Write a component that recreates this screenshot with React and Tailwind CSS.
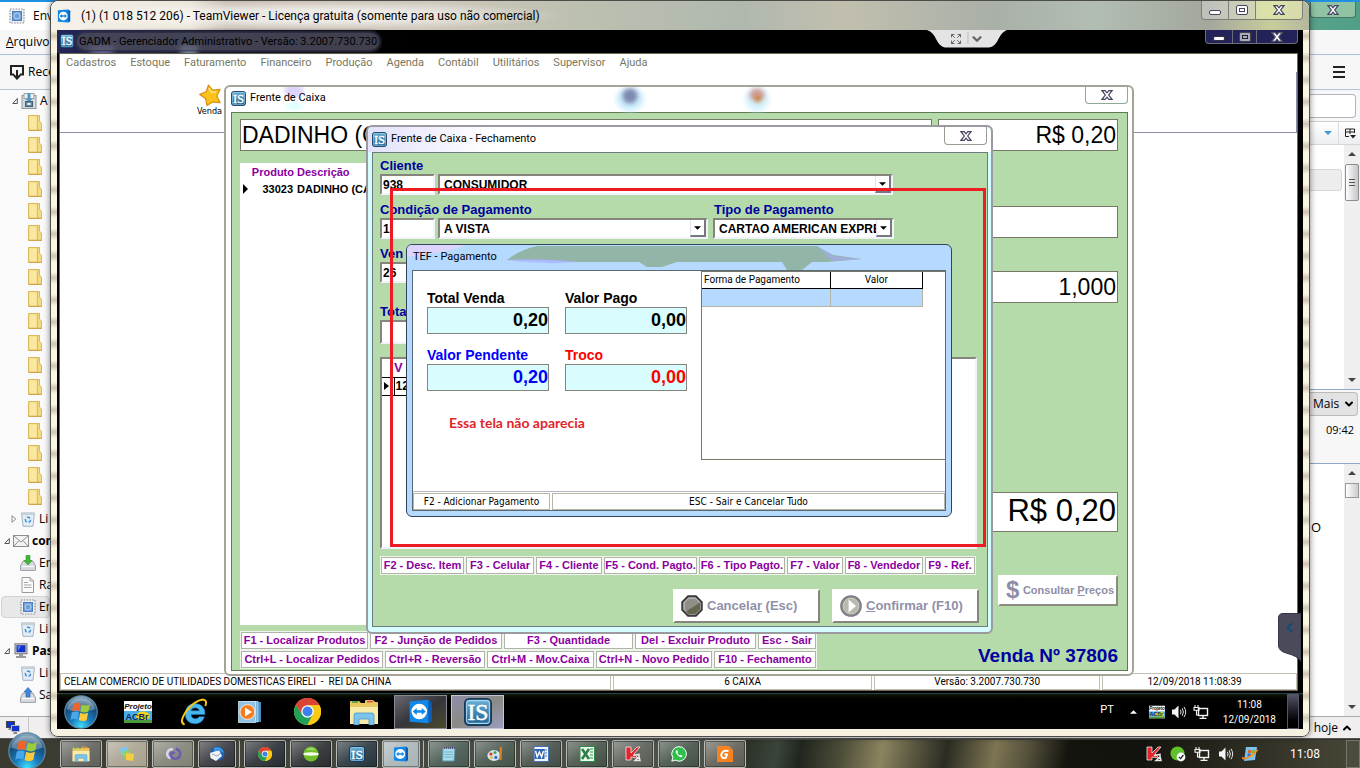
import React from "react";
import { ChevronDown, ChevronUp, ChevronLeft, Expand } from "lucide-react";

const ui = "font-['Open_Sans','Noto_Sans',sans-serif]";
const title = "font-[Roboto,'Open_Sans',sans-serif]";
const sans = "font-['Liberation_Sans',Arial,sans-serif]";
const tahoma = "font-['DejaVu_Sans_Condensed','DejaVu_Sans',sans-serif]";

/* ---------- icons ---------- */

function ISIcon({ className }) {
  return (
    <svg viewBox="0 0 16 16" className={className} aria-hidden="true">
      <defs>
        <linearGradient id="isg" x1="0" y1="0" x2="0" y2="1">
          <stop offset="0" stopColor="#6db4d8" />
          <stop offset="1" stopColor="#1c5f92" />
        </linearGradient>
      </defs>
      <rect x="0.5" y="0.5" width="15" height="15" rx="2.5" fill="url(#isg)" stroke="#153a5c" />
      <rect x="1.5" y="1.5" width="13" height="13" rx="1.5" fill="none" stroke="#a8d4ec" strokeWidth="0.6" />
      <text x="8" y="12.8" textAnchor="middle" fontFamily="Liberation Serif, serif" fontSize="13.5" fill="#fff" stroke="#fff" strokeWidth="0.3">IS</text>
    </svg>
  );
}

function TVIcon({ className }) {
  return (
    <svg viewBox="0 0 16 16" className={className} aria-hidden="true">
      <path d="M1 1.5 L13 0.5 L15 2.5 V14 L13 15.5 L1 14.5 Z" fill="#1187e8" />
      <path d="M13 0.5 L15 2.5 V14 L13 15.5 Z" fill="#0a5cb4" />
      <circle cx="7.2" cy="8" r="5" fill="#fff" />
      <path d="M3 8 L5.6 5.8 V7.2 H8.8 V5.8 L11.4 8 L8.8 10.2 V8.8 H5.6 V10.2 Z" fill="#1187e8" />
    </svg>
  );
}

function StartOrb({ className }) {
  return (
    <svg viewBox="0 0 36 36" className={className} aria-hidden="true">
      <defs>
        <radialGradient id="orb" cx="0.5" cy="0.95" r="0.9">
          <stop offset="0" stopColor="#3fe0ff" />
          <stop offset="0.35" stopColor="#1b7fc0" />
          <stop offset="0.75" stopColor="#174a78" />
          <stop offset="1" stopColor="#7fa2b8" />
        </radialGradient>
      </defs>
      <circle cx="18" cy="18" r="17.2" fill="url(#orb)" stroke="#5c87a5" strokeWidth="1.2" />
      <path d="M3 15 A15.5 15.5 0 0 1 33 15 Q18 20 3 15Z" fill="#fff" opacity="0.3" />
      <path d="M10 9.5 Q13.5 7.2 17.6 9.4 L16.2 17 Q12.5 15 8.6 17.2 Z" fill="#f0642c" />
      <path d="M18.8 10 Q23 12.2 27.4 9.8 L25.8 17.4 Q21.6 19.6 17.4 17.4 Z" fill="#9ccb3c" />
      <path d="M8.3 18.6 Q12 16.4 15.9 18.4 L14.4 26 Q10.8 24 6.9 26.2 Z" fill="#49a8ea" />
      <path d="M17.1 18.8 Q21.2 21 25.5 18.8 L24 26.4 Q20 28.8 15.7 26.6 Z" fill="#fcc93a" />
    </svg>
  );
}

function ChromeIcon({ className }) {
  return (
    <svg viewBox="0 0 26 26" className={className} aria-hidden="true">
      <circle cx="13" cy="13" r="13" fill="#fbc916" />
      <path d="M1.75 6.5 A13 13 0 0 0 13 26 L18.2 16 L13 13 L7.8 16 Z" fill="#1fa05b" />
      <path d="M13 7 H24.6 A13 13 0 0 0 1.75 6.5 L7.8 16 Z" fill="#dc4437" />
      <path d="M24.6 7 H13 L18.2 16 L13 26 A13 13 0 0 0 24.6 7Z" fill="#fbc916" />
      <circle cx="13" cy="13" r="6" fill="#fff" />
      <circle cx="13" cy="13" r="4.8" fill="#3f80ef" />
    </svg>
  );
}

function ExplorerIcon({ className }) {
  return (
    <svg viewBox="0 0 30 26" className={className} aria-hidden="true">
      <path d="M1 3 Q1 2 2 2 H10 L12 4 H16 V2 Q16 1 17 1 H24 L26 3 H28 Q29 3 29 4 V25 H1 Z" fill="#e9c95f" />
      <path d="M1 8 H29 V25 H1 Z" fill="#f9ecab" />
      <path d="M3 3 H9" stroke="#3d9e4a" strokeWidth="1.6" />
      <path d="M18 2.6 H24" stroke="#e05040" strokeWidth="1.6" />
      <path d="M5 26 V16 Q5 14 7 14 H23 Q25 14 25 16 V26 H20 V20 H10 V26 Z" fill="#7cc4ec" stroke="#4a97c9" strokeWidth="0.8" />
    </svg>
  );
}

function AcbrIcon({ className }) {
  return (
    <svg viewBox="0 0 28 22" className={className} aria-hidden="true">
      <rect width="28" height="22" fill="#fff" />
      <rect y="10" width="28" height="9" fill="#49aee6" />
      <ellipse cx="19" cy="15" rx="7" ry="4.4" fill="#f4d21e" />
      <rect y="19" width="28" height="3" fill="#4c9a3e" />
      <text x="14" y="8" textAnchor="middle" fontFamily="Liberation Sans, sans-serif" fontSize="8" fontWeight="bold" fontStyle="italic" fill="#111">Projeto</text>
      <text x="13" y="18.5" textAnchor="middle" fontFamily="Liberation Sans, sans-serif" fontSize="9" fontWeight="bold" fill="#14265e">ACBr</text>
    </svg>
  );
}

function IEIcon({ className }) {
  return (
    <svg viewBox="0 0 28 28" className={className} aria-hidden="true">
      <path d="M25 16.4 H11 Q11.6 20.8 15.4 20.8 Q18 20.8 19.2 18.8 H24.4 Q22 25.8 15 25.8 Q5.4 25.4 5.2 15.8 Q5.6 6 15 5.6 Q25 6 25 16.4 Z M11 12.8 H19.4 Q18.8 9.8 15.2 9.8 Q11.8 9.8 11 12.8Z" fill="#4ab8f0" stroke="#1f80c4" strokeWidth="0.6" fillRule="evenodd" />
      <path d="M4.6 26.6 Q-1.5 24.6 6.4 13 Q15 2.6 22.6 1.6 Q27.8 1.8 25.4 8" fill="none" stroke="#f5c518" strokeWidth="2" />
    </svg>
  );
}

function WmpIcon({ className }) {
  return (
    <svg viewBox="0 0 24 22" className={className} aria-hidden="true">
      <rect x="7" y="1" width="16" height="20" fill="#4b8fc0" />
      <rect x="4" y="0.5" width="16" height="20.5" fill="#77b3dc" stroke="#fff" strokeWidth="0.5" />
      <rect x="0.5" y="0.5" width="17" height="21" fill="#8ec3e6" stroke="#d9eefa" strokeWidth="0.7" />
      <circle cx="9.4" cy="11" r="7.4" fill="#f57c1e" stroke="#fff" strokeWidth="0.8" />
      <path d="M7 6.6 L14 11 L7 15.4Z" fill="#fff" />
    </svg>
  );
}

function VolumeIcon({ className }) {
  return (
    <svg viewBox="0 0 16 16" className={className} aria-hidden="true">
      <path d="M1 5.5 H3.5 L7.5 1.5 V14.5 L3.5 10.5 H1 Z" fill="#f4f4f4" />
      <path d="M9.4 5.8 Q10.8 8 9.4 10.2 M11.2 4.2 Q13.6 8 11.2 11.8 M13 2.8 Q16.4 8 13 13.2" fill="none" stroke="#e8e8e8" strokeWidth="1" />
    </svg>
  );
}

function NetworkIcon({ className }) {
  return (
    <svg viewBox="0 0 16 16" className={className} aria-hidden="true">
      <rect x="5.5" y="4.5" width="9" height="7" fill="none" stroke="#f4f4f4" strokeWidth="1.4" />
      <path d="M10 11.5 V14 M6.5 14.4 H13.5" stroke="#f4f4f4" strokeWidth="1.4" />
      <path d="M2 1 V3.4 M5 1 V3.4 M1 3.5 H6 V6.2 H1 Z M3.5 6 V11 H5.5" fill="none" stroke="#f4f4f4" strokeWidth="1.1" />
    </svg>
  );
}

function KasperIcon({ className }) {
  return (
    <svg viewBox="0 0 16 16" className={className} aria-hidden="true">
      <path d="M1 1 H6 V7 L12 1 H15 L9 8 L13 12 L6 11 V14 H1 Z" fill="#e1262b" stroke="#fff" strokeWidth="0.7" />
      <path d="M8 9.5 L14 8.5 V10.5 L15 14.5 H10 L14 11" fill="none" stroke="#e8e8e8" strokeWidth="1.5" />
    </svg>
  );
}

function FolderIcon() {
  return (
    <svg viewBox="0 0 14 16" className="h-4 w-3.5 shrink-0" aria-hidden="true">
      <path d="M0.5 0.5 H11.5 V6 L13.5 8.5 V15.5 H0.5 Z" fill="#f3da80" stroke="#d9b95c" />
      <path d="M1.5 1.5 H8.5 V14.5 H1.5Z" fill="#f9e9a0" />
      <path d="M9.5 1 V15" stroke="#d9b95c" strokeWidth="0.9" />
      <path d="M1 15.4 H13.4" stroke="#cfa545" strokeWidth="1.2" />
    </svg>
  );
}

function TrashIcon() {
  return (
    <svg viewBox="0 0 16 16" className="size-4 shrink-0" aria-hidden="true">
      <path d="M1.5 2 H14.5 L13 15.3 H3 Z" fill="#e3edf5" stroke="#a3b3c2" />
      <path d="M1.5 2 H14.5 V4 H1.8Z" fill="#c6d0d8" />
      <circle cx="8" cy="8.8" r="2.6" fill="none" stroke="#3b8fd8" strokeWidth="1.5" strokeDasharray="3.4 2" />
    </svg>
  );
}

function StampIcon() {
  return (
    <svg viewBox="0 0 16 16" className="size-4 shrink-0" aria-hidden="true">
      <rect x="1" y="1" width="14" height="14" fill="#eef1f4" stroke="#8a8f94" strokeWidth="1.2" strokeDasharray="1.6 1.2" />
      <rect x="3" y="3" width="10" height="10" fill="#6f9fd8" />
      <circle cx="8" cy="8" r="3" fill="none" stroke="#b6d0ee" />
      <rect x="3.5" y="3.5" width="9" height="9" fill="none" stroke="#4d7fc0" />
    </svg>
  );
}

function TrayIcon({ up }) {
  return (
    <svg viewBox="0 0 16 16" className="size-4 shrink-0" aria-hidden="true">
      <path d="M3 6 H13 L15.5 11 V15.4 H0.5 V11 Z" fill="#d7dade" stroke="#9da2a8" />
      <path d="M2 11.5 H14" stroke="#fff" />
      {up ? (
        <path d="M8 0.5 L12 5 H10 V10 H6 V5 H4Z" fill="#3f86dc" stroke="#2a63b0" strokeWidth="0.6" />
      ) : (
        <path d="M8 10 L12 5.6 H10 V0.5 H6 V5.6 H4Z" fill="#45b83a" stroke="#2d8a26" strokeWidth="0.6" />
      )}
    </svg>
  );
}

function PageIcon() {
  return (
    <svg viewBox="0 0 16 16" className="size-4 shrink-0" aria-hidden="true">
      <path d="M2 0.5 H10 L13.5 4 V15.5 H2 Z" fill="#fafafa" stroke="#9a9a9a" />
      <path d="M10 0.5 V4 H13.5 M4 5.5 H8 M4 8 H11.5 M4 10.5 H11.5" fill="none" stroke="#a5a5a5" />
    </svg>
  );
}

function MailIcon() {
  return (
    <svg viewBox="0 0 16 12" className="h-3 w-4 shrink-0" aria-hidden="true">
      <rect x="0.5" y="0.5" width="15" height="11" fill="#f3f3f3" stroke="#8e8e8e" />
      <path d="M1 1 L8 7 L15 1 M1 11 L6 5.6 M15 11 L10 5.6" fill="none" stroke="#8e8e8e" />
    </svg>
  );
}

function ComputerIcon() {
  return (
    <svg viewBox="0 0 16 16" className="size-4 shrink-0" aria-hidden="true">
      <rect x="2" y="0.8" width="12" height="10" fill="#cfcfcf" stroke="#777" />
      <rect x="3.5" y="2.2" width="9" height="7" fill="#1033c8" />
      <path d="M4.5 3 L8 3 L5 8Z" fill="#5b7cf0" />
      <path d="M6 11 H10 V13 H13 V15 H3 V13 H6Z" fill="#9a9a9a" />
    </svg>
  );
}

function ArchiveIcon() {
  return (
    <svg viewBox="0 0 16 16" className="size-4 shrink-0" aria-hidden="true">
      <rect x="1" y="2.5" width="14" height="13" fill="#d6dade" stroke="#8f979e" />
      <rect x="3" y="0.5" width="10" height="5" fill="#eceff1" stroke="#9ba3aa" />
      <path d="M6.5 0 H9.5 V6 H11.5 L8 9 L4.5 6 H6.5Z" fill="#4e97c4" />
      <rect x="4.5" y="8.5" width="7" height="5" fill="#5b8fae" stroke="#46606f" />
      <rect x="6.5" y="10" width="3" height="2" fill="#f3f6f8" />
    </svg>
  );
}

function Expander({ open }) {
  return (
    <svg viewBox="0 0 6 8" className="h-2 w-1.5 shrink-0" aria-hidden="true">
      {open ? (
        <path d="M5.3 1.5 V6.5 H0.8Z" fill="#fff" stroke="#555" />
      ) : (
        <path d="M1 0.7 L4.8 4 L1 7.3Z" fill="#fff" stroke="#888" />
      )}
    </svg>
  );
}

function Triangle({ up, className }) {
  return (
    <svg viewBox="0 0 8 4" className={className} aria-hidden="true">
      <path d={up ? "M0 4 L4 0 L8 4Z" : "M0 0 H8 L4 4Z"} fill="currentColor" />
    </svg>
  );
}

/* x glyph of the glass close buttons */
function CloseGlyph({ light }) {
  return (
    <svg viewBox="0 0 12 10" className="h-2.5 w-3" aria-hidden="true">
      <path
        d="M1 0.7 H4.2 L6 2.8 L7.8 0.7 H11 L7.7 5 L11 9.3 H7.8 L6 7.2 L4.2 9.3 H1 L4.3 5Z"
        fill="#fff"
        stroke={light ? "#55556a" : "#45455f"}
        strokeWidth="1.2"
      />
    </svg>
  );
}

/* ---------- mail program behind ---------- */

function SideRow({ children, text, bold, active, pad }) {
  return (
    <li
      className={
        "flex h-[22px] shrink-0 items-center gap-[3px] overflow-hidden whitespace-nowrap text-[12px] text-black " +
        pad +
        (bold ? " font-bold" : "") +
        (active ? " ml-px rounded border border-[#d4d4d4] bg-[#e8e8e8]" : "")
      }
    >
      {children}
      <span>{text}</span>
    </li>
  );
}

function MailWindow() {
  return (
    <div className={"flex min-h-0 flex-1 flex-col bg-[#fafafa] " + ui}>
      <div className="flex h-[30px] shrink-0 justify-between border-t-2 border-[#2090e0] bg-linear-to-r from-white from-10% to-[#4f9f86] to-100%">
        <div className="flex items-center gap-2 pl-[9px] text-[12px]">
          <StampIcon />
          <span>Env</span>
        </div>
        <button aria-label="Fechar e-mail" className="mr-1 flex h-4 w-[46px] items-center justify-center rounded-b border border-t-0 border-[#47756a] bg-[#8fc3a3]">
          <CloseGlyph />
        </button>
      </div>
      <div className="flex h-[25px] shrink-0 items-center border-b border-[#a9c0da] bg-[#f7f7f7] pl-1.5 text-[12px]">
        <span><u>A</u>rquivo</span>
      </div>
      <div className="flex h-[35px] shrink-0 items-center justify-between border-b border-[#b5c3d3] bg-[#f7f7f7] pr-[15px] pl-[9px] text-[12px]">
        <span className="flex items-center gap-[3px]">
          <svg viewBox="0 0 16 16" className="size-4" aria-hidden="true">
            <path d="M5 10.5 H2 V2 H14 V10.5 H11" fill="none" stroke="#222" strokeWidth="2" />
            <path d="M8 6 V13 M4.8 11 L8 14.6 L11.2 11" fill="none" stroke="#222" strokeWidth="2" />
          </svg>
          Rece
        </span>
        <button aria-label="Menu" className="flex flex-col gap-[3px]">
          <span className="h-0.5 w-3 bg-[#222]" />
          <span className="h-0.5 w-3 bg-[#222]" />
          <span className="h-0.5 w-3 bg-[#222]" />
        </button>
      </div>
      <div className="flex min-h-0 flex-1 justify-between">
        <ul className="flex w-[50px] flex-col overflow-hidden bg-[#fafafa]">
          <SideRow text="A" pad="pl-3"><Expander open /><ArchiveIcon /></SideRow>
          {Array.from({ length: 18 }, (_, i) => (
            <SideRow key={i} text="" pad="pl-7"><FolderIcon /></SideRow>
          ))}
          <SideRow text="Li" pad="pl-[11px]"><Expander /><TrashIcon /></SideRow>
          <SideRow text="com" bold pad="pl-1"><Expander open /><MailIcon /></SideRow>
          <SideRow text="En" pad="pl-5"><TrayIcon /></SideRow>
          <SideRow text="Ra" pad="pl-5"><PageIcon /></SideRow>
          <SideRow text="En" active pad="pl-[18px]"><StampIcon /></SideRow>
          <SideRow text="Li" pad="pl-5"><TrashIcon /></SideRow>
          <SideRow text="Pas" bold pad="pl-1"><Expander open /><ComputerIcon /></SideRow>
          <SideRow text="Li" pad="pl-5"><TrashIcon /></SideRow>
          <SideRow text="Sa" pad="pl-5"><TrayIcon up /></SideRow>
        </ul>
        <div className="flex w-[50px] flex-col bg-white">
          <div className="flex h-8 shrink-0 items-center border-b border-[#d0d0d0] bg-[#f5f7fa] pr-1">
            <input aria-label="Pesquisar" className="h-6 w-full rounded-r border border-l-0 border-[#b5b5b5] bg-white" />
          </div>
          <div className="flex h-[23px] shrink-0 items-center justify-end gap-1.5 border-b border-[#d5d5d5] bg-linear-to-b from-white to-[#eceef2] pr-1">
            <Triangle className="h-1 w-2 text-[#3c9ad0]" />
            <span className="h-full w-px bg-[#ddd]" />
            <svg viewBox="0 0 11 11" className="size-[11px]" aria-hidden="true">
              <path d="M0.5 1 H9.5 V5 M0.5 1 V8.5 H4 M0.5 4 H9.5 M5 1 V6" fill="none" stroke="#222" />
              <path d="M5 7 H11 L8 10.5Z" fill="#222" />
            </svg>
          </div>
          <div className="flex h-[245px] shrink-0 justify-end border-b border-[#8fa8c8]">
            <div className="flex-1 pt-6">
              <div className="h-[22px] rounded-r border border-l-0 border-[#d5d5d5] bg-[#ededed]" />
            </div>
            <div className="ml-0.5 flex w-4 flex-col items-center justify-between bg-[#efefef] py-[7px]">
              <div className="flex flex-col items-center gap-2">
                <Triangle up className="h-1 w-2 text-[#444]" />
                <div className="flex h-[37px] w-3.5 flex-col items-center justify-center gap-0.5 rounded-xs border border-[#8d8d8d] bg-linear-to-r from-white to-[#c5c5ca]">
                  <span className="h-px w-1.5 bg-[#555]" />
                  <span className="h-px w-1.5 bg-[#555]" />
                  <span className="h-px w-1.5 bg-[#555]" />
                </div>
              </div>
              <Triangle className="h-1 w-2 text-[#444]" />
            </div>
          </div>
          <div className="flex h-[74px] shrink-0 flex-col gap-1.5 border-b border-[#8fa8c8] bg-[#f7f7f7] pt-0.5 text-[12px]">
            <button className="mr-0.5 flex h-6 items-center justify-between rounded-r border border-l-0 border-[#bbb] bg-[#e2e2e2] pr-0.5 pl-[3px]">
              Mais
              <ChevronDown size={12} strokeWidth={4} />
            </button>
            <span className="self-end pr-1.5 text-[11px]">09:42</span>
          </div>
          <div className="flex min-h-0 flex-1 justify-between">
            <span className="pt-[54px] pl-px text-[13px]">O</span>
            <div className="flex w-4 flex-col items-center justify-between bg-[#efefef] py-[7px]">
              <div className="flex flex-col items-center gap-2">
                <Triangle up className="h-1 w-2 text-[#444]" />
                <div className="h-[15px] w-3.5 border border-[#999] bg-linear-to-r from-white to-[#ccc]" />
              </div>
              <Triangle className="h-1 w-2 text-[#444]" />
            </div>
          </div>
        </div>
      </div>
      <div className="flex h-[22px] shrink-0 items-center justify-between border-t border-[#aaa] bg-[#f0eeee] pr-[7px] pl-1.5 text-[12px]">
        <span className="flex h-full items-center gap-2">
          <svg viewBox="0 0 14 14" className="size-3.5" aria-hidden="true">
            <rect x="0.5" y="0.5" width="8" height="6" fill="#1033c8" stroke="#444" />
            <path d="M3 7 H6 V9 H2Z" fill="#888" />
            <rect x="5.5" y="4.5" width="8" height="6" fill="#1033c8" stroke="#bbb" />
            <path d="M8 11 H11 V13 H7Z" fill="#888" />
          </svg>
          <span className="h-full w-px bg-[#c5c5c5]" />
        </span>
        <span className="flex items-center gap-[3px]">hoje <ChevronUp size={12} strokeWidth={4} /></span>
      </div>
    </div>
  );
}

/* ---------- taskbars ---------- */

const apps = [
  { name: "Explorer", tone: "bg-[#5f605a]", icon: <ExplorerIcon className="h-4 w-[18px]" /> },
  {
    name: "Notas", tone: "bg-[#a8a18e]", icon: (
      <svg viewBox="0 0 16 16" className="size-4" aria-hidden="true">
        <path d="M1 2 L8 1 L9 7 L2 9Z" fill="#7fc5ee" /><path d="M3 6 L10 4 L12 10 L5 12Z" fill="#8ed36a" /><path d="M7 7 L15 8 L14 15 L7 14Z" fill="#f5cf3f" />
      </svg>),
  },
  {
    name: "Visual Studio", tone: "bg-[#7f8174]", icon: (
      <svg viewBox="0 0 18 14" className="h-3.5 w-[18px]" aria-hidden="true">
        <path d="M9 2.4 A4.6 4.6 0 1 0 6.6 11.4" fill="none" stroke="#ddd6f2" strokeWidth="2.4" />
        <path d="M10.6 6.4 Q8.4 4.6 7 6.8 Q6.4 11.4 11.4 11.8 Q16.2 11.2 16.2 6.4 Q15.6 2.4 11.6 1.8" fill="none" stroke="#6d5bb0" strokeWidth="2.6" />
      </svg>),
  },
  {
    name: "Thunderbird", tone: "bg-[#33343a]", stacked: true, icon: (
      <svg viewBox="0 0 16 16" className="size-4" aria-hidden="true">
        <circle cx="8.5" cy="7.5" r="7" fill="#1e62b8" /><path d="M1 7 L10 4 L13 10 L7 15 L1.5 12Z" fill="#eef3f8" /><path d="M3 8 L8 10 L12 7" fill="none" stroke="#9ab" />
        <path d="M5 2 Q12 -1 15 7 Q11 4 5 5Z" fill="#3f97e6" />
      </svg>),
  },
  { name: "Chrome", tone: "bg-[#262b32]", icon: <ChromeIcon className="size-3.5" /> },
  {
    name: "Bola", tone: "bg-[#282c2e]", icon: (
      <svg viewBox="0 0 16 16" className="size-4" aria-hidden="true"><circle cx="8" cy="8" r="7.5" fill="#6fbf2a" /><path d="M0.6 7 Q8 5.4 15.4 7 V9 Q8 10.6 0.6 9Z" fill="#f3fbe9" /><path d="M3 4 Q8 0.6 13 4 Q8 3 3 4Z" fill="#c9ec9c" /></svg>),
  },
  { name: "IS", tone: "bg-[#26323a]", icon: <ISIcon className="size-4" /> },
  { name: "TeamViewer", tone: "bg-[#a9b4b6]", stacked: true, icon: <TVIcon className="size-4" /> },
  {
    name: "Bloco de notas", tone: "bg-[#46564f]", icon: (
      <svg viewBox="0 0 14 16" className="h-4 w-3.5" aria-hidden="true"><path d="M1 2 H13 L12 15 H0.5Z" fill="#a7dcec" stroke="#5d99ad" /><path d="M2 2 H13" stroke="#557" strokeWidth="2" strokeDasharray="1 1" /><path d="M2.5 6 H11 M2.5 8.5 H11 M2.5 11 H11" stroke="#74b5c8" /></svg>),
  },
  {
    name: "Paint", tone: "bg-[#435247]", icon: (
      <svg viewBox="0 0 16 16" className="size-4" aria-hidden="true"><ellipse cx="7" cy="9.5" rx="6.6" ry="5.4" fill="#d6e4ee" /><circle cx="4" cy="8" r="1.6" fill="#d43a2a" /><circle cx="8" cy="6.6" r="1.5" fill="#3fa843" /><circle cx="4.4" cy="11.6" r="1.4" fill="#e3b722" /><circle cx="8.8" cy="11.4" r="1.6" fill="#2a6fd4" /><path d="M14 1 L13.4 14" stroke="#d77f22" strokeWidth="2.4" /></svg>),
  },
  {
    name: "Word", tone: "bg-[#434c46]", icon: (
      <svg viewBox="0 0 16 16" className="size-4" aria-hidden="true"><rect x="1" y="0.5" width="14.5" height="15" fill="#f2f6fc" stroke="#4472b8" /><path d="M11 4 H14 M12 7 H14 M12 10 H14" stroke="#4472b8" /><rect x="1.5" y="3" width="10" height="10" fill="#2f63b4" /><path d="M2.6 5 L4.2 11 L6.4 6 L8.6 11 L10.4 5" fill="none" stroke="#fff" strokeWidth="1.4" /></svg>),
  },
  {
    name: "Excel", tone: "bg-[#435144]", icon: (
      <svg viewBox="0 0 16 16" className="size-4" aria-hidden="true"><rect x="1" y="0.5" width="14.5" height="15" fill="#eef8ee" stroke="#2e8b4c" /><path d="M11 3 H14 M11 6 H14 M11 9 H14 M11 12 H14" stroke="#2e8b4c" /><path d="M3 3 L10 13 M10 3 L3 13" stroke="#2a8046" strokeWidth="2.6" /></svg>),
  },
  { name: "Kaspersky", tone: "bg-[#565b54]", icon: <KasperIcon className="size-4" /> },
  {
    name: "WhatsApp", tone: "bg-[#435146]", icon: (
      <svg viewBox="0 0 16 16" className="size-4" aria-hidden="true"><path d="M8 0.6 A7.3 7.3 0 1 1 4.4 14.2 L0.8 15.2 L1.8 11.7 A7.3 7.3 0 0 1 8 0.6Z" fill="#2fc04b" stroke="#fff" /><path d="M5 4.5 Q4 6 6 8.6 Q8.6 11.8 11 11 Q12 10 11 9.4 L9.6 8.8 L8.8 9.6 Q7 8.6 6.4 7 L7 6.2 L6.4 4.4Z" fill="#fff" /></svg>),
  },
  {
    name: "Foxit", tone: "bg-[#5d5d54]", icon: (
      <svg viewBox="0 0 16 16" className="size-4" aria-hidden="true"><path d="M0 0 H12 L16 4 V16 H0Z" fill="#f58220" /><path d="M11.5 5 Q5 3.6 4.2 9 Q5 13.4 9 11.6 L10 8.4 H7.4" fill="none" stroke="#fff" strokeWidth="1.9" /></svg>),
  },
];

function Taskbar() {
  return (
    <div className="flex h-[30px] shrink-0 items-stretch justify-between border-t border-[#555] bg-linear-to-r from-[#3b3a30] from-0% via-[#4c5249] via-50% to-[#33312a] pt-px">
      <div className="flex gap-1">
        <button aria-label="Iniciar" className="relative w-14">
          <StartOrb className="absolute -top-2 left-2 size-[38px]" />
        </button>
        {apps.map((a) => (
          <button key={a.name} aria-label={a.name} className="flex w-[42px] items-stretch gap-0.5">
            <span className={"flex flex-1 items-center justify-center rounded-xs border border-[#b9bcb6] bg-linear-to-br from-white/40 via-white/10 via-50% to-transparent shadow-[inset_0_0_0_1px_rgba(0,0,0,0.35)] " + a.tone}>
              {a.icon}
            </span>
            {a.stacked && <span className="w-0.5 rounded-r-xs border-r border-[#b9bcb6] bg-[#44463f]" />}
          </button>
        ))}
      </div>
      <div className="flex-1 bg-[linear-gradient(100deg,#2a3128_0%,#3b443a_8%,#20261f_14%,#4d4d38_24%,#8b845f_34%,#5a5740_42%,#2b2c22_50%,#7d7553_62%,#55513c_70%,#15150f_80%,#12120e_100%)]" />
      <div className={"flex items-center gap-2 bg-[#15150f] bg-linear-to-r from-transparent to-[#4a4838] text-[12px] text-white " + title}>
        <KasperIcon className="size-4" />
        <svg viewBox="0 0 16 16" className="size-4" aria-hidden="true">
          <circle cx="7.5" cy="7.5" r="7" fill="#5fc22a" /><circle cx="11" cy="11" r="4.4" fill="#fff" /><path d="M9 11 L10.6 12.6 L13.4 9" fill="none" stroke="#222" strokeWidth="1.3" />
        </svg>
        <NetworkIcon className="size-4" />
        <VolumeIcon className="size-4" />
        <svg viewBox="0 0 16 16" className="size-4" aria-hidden="true">
          <path d="M4 1 H15 L13 14 L2 15Z" fill="#7cc2ee" /><rect x="6" y="4" width="3" height="3" fill="#e5632b" /><rect x="9.5" y="4" width="3" height="3" fill="#7ab92f" /><rect x="5.6" y="7.6" width="3" height="3" fill="#2a6fd0" /><rect x="9" y="7.6" width="3" height="3" fill="#f3c431" />
          <path d="M1 11 Q0 14 5 12 Q14 7 15.4 3.6" fill="none" stroke="#f08c20" strokeWidth="1.6" />
        </svg>
        <span className="pr-[18px] pl-6">11:08</span>
        <button aria-label="Mostrar desktop" className="h-full w-3.5 border border-[#77776a] bg-[#4c4b40]" />
      </div>
    </div>
  );
}

function RemoteTaskbar() {
  return (
    <div className="flex h-9 shrink-0 items-center justify-between border-t border-[#2b3f4a] bg-black bg-linear-to-b from-[#101a08] to-black to-25% text-white">
      <div className="flex h-full items-center">
        <button aria-label="Menu iniciar" className="pl-[7px]"><StartOrb className="size-[34px]" /></button>
        <button aria-label="ACBr" className="ml-[26px]"><AcbrIcon className="h-[22px] w-7" /></button>
        <button aria-label="Internet Explorer" className="ml-7"><IEIcon className="size-7" /></button>
        <button aria-label="Media Player" className="ml-[30px]"><WmpIcon className="h-[22px] w-6" /></button>
        <button aria-label="Chrome remoto" className="ml-8"><ChromeIcon className="size-[27px]" /></button>
        <button aria-label="Pastas" className="ml-7"><ExplorerIcon className="h-[26px] w-[30px]" /></button>
        <button aria-label="TeamViewer remoto" className="ml-[15px] flex h-[34px] w-[53px] items-center justify-center border border-[#8a8a9a] bg-linear-to-br from-[#6a6a72] via-[#35353c] to-[#4c4a28]">
          <TVIcon className="h-[27px] w-[25px]" />
        </button>
        <button aria-label="IS remoto" className="ml-1 flex h-[34px] w-[53px] items-center justify-center border border-[#c5c5e0] bg-linear-to-br from-[#8f8fa8] via-[#8a8a85] to-[#9c9cc0]">
          <ISIcon className="size-7" />
        </button>
      </div>
      <div className={"flex h-full items-center text-[10px] leading-[15px] " + title}>
        <span className="pb-1 text-[11px]">PT</span>
        <Triangle up className="ml-4 h-1 w-[7px]" />
        <AcbrIcon className="ml-3 h-3.5 w-4" />
        <VolumeIcon className="ml-1.5 size-4" />
        <NetworkIcon className="ml-1.5 size-4" />
        <span className="mr-[11px] ml-3.5 flex flex-col items-center">
          <span>11:08</span>
          <span>12/09/2018</span>
        </span>
        <button aria-label="Mostrar desktop remoto" className="mr-1 h-full w-3 border border-[#555568] bg-linear-to-b from-[#55556a] to-black" />
      </div>
    </div>
  );
}

/* ---------- remote session ---------- */

const menus = ["Cadastros", "Estoque", "Faturamento", "Financeiro", "Produção", "Agenda", "Contábil", "Utilitários", "Supervisor", "Ajuda"];

function WindowButtons({ dark }) {
  const edge = dark ? "border-[#6d6d78]" : "border-[#7a7f78]";
  return (
    <div className={"flex shrink-0 overflow-hidden rounded-b border border-t-0 " + edge + (dark ? " h-3.5 bg-[#23235a]" : " h-[19px] bg-white/30")}>
      <button aria-label="Minimizar" className={"flex w-[27px] items-center justify-center border-r " + edge}>
        <span className={"mt-1 h-[5px] w-3 rounded-xs border bg-white " + (dark ? "border-[#333]" : "border-[#45455f]")} />
      </button>
      <button aria-label="Maximizar" className={"flex items-center justify-center border-r " + edge + (dark ? " w-6" : " w-[27px]")}>
        <span className={"flex h-2.5 w-3 items-center justify-center rounded-xs border " + (dark ? "border-[#444] bg-[#aaaac5]" : "border-[#45455f] bg-white")}>
          <span className={"h-1 w-1.5 border " + (dark ? "border-[#222]" : "border-[#45455f]")} />
        </span>
      </button>
      <button aria-label="Fechar" className={"flex items-center justify-center " + (dark ? "w-10" : "w-[46px] bg-[#dfe59a]/50")}>
        <CloseGlyph light={dark} />
      </button>
    </div>
  );
}

function TeamViewerWindow() {
  return (
    <div className="absolute inset-x-[50px] top-0 bottom-[31px] flex flex-col rounded-lg border border-[#4c4c48] bg-[repeating-linear-gradient(to_bottom,#fbf6e2_0px,#fbf6e2_7px,#cfc5b2_13px,#fbf6e2_19px,#fbf6e2_22px)] px-1.5 shadow-[0_0_6px_rgba(0,0,0,0.5)]">
      <div className="-mx-1.5 flex h-[29px] shrink-0 items-start justify-between rounded-t-lg bg-[linear-gradient(90deg,#f5f2ea_0%,#ece6da_11%,#c9bfb4_14%,#cfc8bc_30%,#bcc0b0_42%,#b0b8ae_55%,#c2bfae_63%,#a9b0a8_75%,#b2bdb4_83%,#a3a79c_92%,#c9cc9a_97%,#b5b8a0_100%)] pr-1.5 pl-1.5">
        <div className={"flex h-[29px] items-center gap-2.5 bg-[radial-gradient(closest-side,rgba(255,255,255,0.65)_40%,transparent)] pr-6 text-[12px] text-black " + title}>
          <TVIcon className="h-4 w-3.5" />
          <span>(1) (1 018 512 206) - TeamViewer - Licença gratuita (somente para uso não comercial)</span>
        </div>
        <WindowButtons />
      </div>
      <div className="relative flex min-h-0 flex-1 flex-col bg-black">
        <div className="relative flex h-[23px] shrink-0 items-start justify-between bg-linear-to-r from-[#26265a] via-black via-30% to-black pl-[3px]">
          <svg viewBox="0 0 160 23" className="absolute top-0 left-0 h-[23px] w-40" aria-hidden="true">
            <defs><filter id="glow"><feGaussianBlur stdDeviation="2" /></filter></defs>
            <g filter="url(#glow)">
              <ellipse cx="45" cy="19" rx="13" ry="5" fill="#9c9cf0" />
              <ellipse cx="132" cy="19" rx="10" ry="5" fill="#c5e6ff" />
            </g>
          </svg>
          <div className="relative flex h-[22px] items-center gap-[3px]">
            <ISIcon className="size-3.5" />
            <span className={"rounded-full bg-[#4b4b5c]/85 px-0.5 text-[11px] leading-[17px] text-black shadow-[0_0_3px_2px_#33334a] " + title}>
              GADM - Gerenciador Administrativo - Versão: 3.2007.730.730
            </span>
          </div>
          <div className="pr-[5px]"><WindowButtons dark /></div>
        </div>
        <div className="mr-[5px] ml-0.5 flex min-h-0 flex-1 flex-col border border-[#6a6a55] bg-white">
          <nav className={"flex h-[18px] shrink-0 items-center gap-3.5 px-1.5 text-[11px] text-[#77775f] " + title}>
            {menus.map((m) => (
              <button key={m}>{m}</button>
            ))}
          </nav>
          <div className="flex h-[61px] shrink-0 border-r border-b border-[#8c8cae] pt-3 pl-[137px]">
            <button className={"flex flex-col items-center text-[9px] leading-[11px] text-black " + tahoma}>
              <svg viewBox="0 0 22 22" className="size-[22px]" aria-hidden="true">
                <path d="M9.5 1 L13.5 6.2 L21 5.4 L17.8 12 L21 18.6 L13.6 18 L8 21.4 L6.6 14.4 L0.8 10.4 L7.2 7.8Z" fill="#fcc21b" stroke="#d98d10" strokeWidth="1.2" strokeLinejoin="round" />
                <path d="M9.8 4 L12.4 8 L17 8" fill="none" stroke="#ffe88a" strokeWidth="1.4" />
              </svg>
              Venda
            </button>
          </div>
          <div className="min-h-0 flex-1" />
          <div className={"flex h-[17px] shrink-0 gap-0.5 text-[10px] leading-[15px] text-black " + title}>
            <span className="w-[551px] border border-[#c0c0b5] px-[3px]">CELAM COMERCIO DE UTILIDADES DOMESTICAS EIRELI&nbsp; -&nbsp; REI DA CHINA</span>
            <span className="flex-[263] border border-[#c0c0b5] text-center">6 CAIXA</span>
            <span className="flex-[229] border border-[#c0c0b5] text-center">Versão: 3.2007.730.730</span>
            <span className="flex-[187] border border-[#c0c0b5] pr-2.5 text-center">12/09/2018 11:08:39</span>
          </div>
        </div>
        <div className="h-0.5 shrink-0 bg-black" />
        <RemoteTaskbar />
        <div className="absolute top-0 right-[296px] flex h-[18px] w-20 items-center justify-center gap-2 text-[#666]">
          <svg viewBox="0 0 80 18" className="absolute inset-0 size-full" aria-hidden="true">
            <path d="M0 0 H80 Q75 2 72 8 Q68 17 62 17.5 H18 Q13 17 9 9 Q6 2 0 0Z" fill="#e4e4e4" />
            <path d="M41 2 V14" stroke="#bbb" />
          </svg>
          <Expand size={12} className="relative" />
          <ChevronDown size={14} strokeWidth={4} className="relative" />
        </div>
        <button aria-label="Painel lateral" className="absolute right-0.5 bottom-[67px] h-[49px] w-[23px] text-[#0e4d78]">
          <svg viewBox="0 0 23 49" className="absolute inset-0 size-full" aria-hidden="true">
            <path d="M23 0.5 H5 Q0.5 0.5 0.5 5 V33 Q1 38 8 40 Q20 43 23 48.5Z" fill="#4a4a5a" stroke="#34344a" />
          </svg>
          <ChevronLeft size={15} strokeWidth={3} className="absolute top-[7px] left-1" />
        </button>
      </div>
      <div className="-mx-1.5 h-[7px] shrink-0 rounded-b-lg bg-[#f6f0e0]" />
    </div>
  );
}

/* ---------- point-of-sale windows ---------- */

function Hints({ items }) {
  return (
    <div className={"flex h-[19px] w-max gap-0.5 border border-[#eef5ea] bg-[#eef5ea] text-[11px] leading-[15px] font-bold whitespace-nowrap text-[#8b00a0] " + sans}>
      {items.map(([text, w]) => (
        <span key={text} className={"border border-[#b0b4a8] bg-white text-center " + w}>{text}</span>
      ))}
    </div>
  );
}

function CaixaWindow() {
  const box = "border border-[#77776a] bg-white text-right";
  return (
    <section className="absolute inset-x-[224px] right-[226px] top-[85px] h-[591px] overflow-hidden rounded-md border-2 border-[#a3a396] bg-white">
      <svg viewBox="0 0 600 26" className="absolute top-0 left-0 h-[26px] w-[600px]" aria-hidden="true">
        <defs><filter id="soft"><feGaussianBlur stdDeviation="2" /></filter></defs>
        <g filter="url(#soft)">
          <ellipse cx="68" cy="4" rx="10" ry="7" fill="#dcd4fa" />
          <ellipse cx="68" cy="19" rx="9" ry="3" fill="#d5ffff" />
          <ellipse cx="404" cy="12" rx="14" ry="12" fill="#cfeeff" />
          <ellipse cx="404" cy="9" rx="8" ry="8" fill="#7f8bb0" />
          <ellipse cx="531" cy="12" rx="12" ry="12" fill="#d5f4ff" />
          <ellipse cx="531" cy="8" rx="8" ry="7" fill="#d2a0a0" />
          <ellipse cx="532" cy="12" rx="4" ry="4" fill="#c98828" />
        </g>
      </svg>
      <header className="relative flex h-[25px] items-start justify-between pr-1 pl-[5px]">
        <h2 className={"flex h-[23px] items-center gap-1 text-[11px] " + title}>
          <ISIcon className="size-[15px]" />
          Frente de Caixa
        </h2>
        <button aria-label="Fechar caixa" className="flex h-[17px] w-[43px] items-center justify-center rounded-b border border-t-0 border-[#8ea89a]">
          <CloseGlyph />
        </button>
      </header>
      <div className={"mr-1 ml-[5px] flex h-[559px] justify-between border border-[#5f7a55] bg-[#b4dba9] pr-[9px] pl-2 " + sans}>
        <div className="flex w-[692px] flex-col pt-1.5">
          <div className="h-8 border border-[#77776a] bg-white pl-px text-[23px] leading-[30px] whitespace-nowrap">DADINHO (C</div>
          <table className="mt-3 block h-[462px] bg-white text-[11px] font-bold">
            <thead>
              <tr className="h-[18px] text-left text-[#8b00a0]">
                <th className="pr-[3px] text-right" colSpan={2}>Produto</th>
                <th>Descrição</th>
              </tr>
            </thead>
            <tbody>
              <tr className="h-4">
                <td className="w-4 pl-[3px]"><svg viewBox="0 0 5 10" className="h-2.5 w-[5px]" aria-hidden="true"><path d="M0 0 L5 5 L0 10Z" /></svg></td>
                <td className="w-[41px] pr-1 text-right">33023</td>
                <td className="whitespace-nowrap">DADINHO (CA</td>
              </tr>
            </tbody>
          </table>
          <div className="mt-1.5 flex flex-col">
            <Hints items={[["F1 - Localizar Produtos", "w-[127px]"], ["F2 - Junção de Pedidos", "w-[132px]"], ["F3 - Quantidade", "w-[129px]"], ["Del - Excluir Produto", "w-[121px]"], ["Esc - Sair", "w-[58px]"]]} />
            <Hints items={[["Ctrl+L - Localizar Pedidos", "w-[142px]"], ["Ctrl+R - Reversão", "w-[100px]"], ["Ctrl+M - Mov.Caixa", "w-[107px]"], ["Ctrl+N - Novo Pedido", "w-[116px]"], ["F10 - Fechamento", "w-[102px]"]]} />
          </div>
        </div>
        <div className="flex w-[180px] flex-col pt-1.5">
          <div className={box + " h-8 pr-px text-[23px] leading-[30px]"}>R$ 0,20</div>
          <div className={box + " mt-[55px] h-8"} />
          <div className={box + " mt-[33px] h-8 pr-px text-[23px] leading-[30px]"}>1,000</div>
          <div className={box + " mt-[189px] h-10 pr-px text-[31px] leading-[36px]"}>R$ 0,20</div>
          <button className="mt-[43px] ml-auto flex h-[31px] w-[120px] items-center justify-between border-2 border-white border-r-[#8a8a80] border-b-[#8a8a80] bg-white px-0.5 text-[11px] font-bold text-[#8e8ea8]">
            <span className="pl-1 text-[24px]">$</span>
            <span>Consultar <u>P</u>reços</span>
          </button>
          <div className="mt-9 text-right text-[19px] font-bold text-[#0000a0]">Venda Nº 37806</div>
        </div>
      </div>
    </section>
  );
}

const sunken = "border-2 border-[#f2f2fa] border-t-[#85857c] border-l-[#85857c] bg-white";

function Code({ label, value }) {
  return <input aria-label={label} defaultValue={value} className={"h-[21px] w-[55px] px-px text-[12px] font-bold outline-none " + sunken} />;
}

function Combo({ id, value, width }) {
  return (
    <div className={"flex h-[21px] bg-white " + sunken + " " + width}>
      <select id={id} className="min-w-0 flex-1 appearance-none bg-white pl-1 text-[12px] leading-4 font-bold outline-none">
        <option>{value}</option>
      </select>
      <span className="flex w-4 items-center justify-center border-r-2 border-b-2 border-l border-[#77777c] border-l-[#e2e2f0]">
        <Triangle className="h-1 w-[7px] text-black" />
      </span>
    </div>
  );
}

function FechamentoWindow() {
  const label = "text-[13px] leading-[15px] font-bold text-[#0000a0]";
  return (
    <section className="absolute top-[125px] left-[366px] h-[509px] w-[627px] rounded-md border-2 border-[#9a9aa0] bg-[#d6fdff]">
      <header className="relative flex h-[25px] items-start justify-between rounded-t-md bg-linear-to-r from-[#e2e2fa] via-white via-20% to-white pr-1 pl-1">
        <h2 className={"flex h-6 items-center gap-1 text-[11px] " + title}>
          <ISIcon className="size-[15px]" />
          Frente de Caixa - Fechamento
        </h2>
        <button aria-label="Fechar fechamento" className="flex h-[18px] w-[43px] items-center justify-center rounded-b border border-t-0 border-[#9a9a90] bg-white">
          <CloseGlyph />
        </button>
      </header>
      <form className={"mr-[3px] ml-1 flex h-[475px] flex-col border border-[#6d7a80] bg-[#b4dba9] pt-[5px] pr-2.5 pl-[7px] " + sans}>
        <label htmlFor="cliente" className={label}>Cliente</label>
        <div className="mt-px flex gap-[3px]">
          <Code label="Código do cliente" value="938" />
          <Combo id="cliente" value="CONSUMIDOR" width="w-[455px]" />
        </div>
        <div className="mt-[7px] flex">
          <label htmlFor="cond" className={label + " w-[334px]"}>Condição de Pagamento</label>
          <label htmlFor="tipo" className={label}>Tipo de Pagamento</label>
        </div>
        <div className="mt-px flex gap-[3px]">
          <Code label="Código da condição" value="1" />
          <Combo id="cond" value="A VISTA" width="w-[270px]" />
          <div className="pl-0.5"><Combo id="tipo" value="CARTAO AMERICAN EXPRE" width="w-[181px]" /></div>
        </div>
        <label htmlFor="vend" className={label + " mt-[7px]"}>Ven</label>
        <div className="mt-px flex gap-[3px]">
          <input id="vend" defaultValue="26" className={"h-[21px] w-[55px] px-px text-[12px] font-bold outline-none " + sunken} />
        </div>
        <label htmlFor="total" className={label + " mt-[21px]"}>Tota</label>
        <input id="total" className={"mt-px h-6 w-[120px] outline-none " + sunken} />
        <table className="mt-[13px] block h-[192px] border-2 border-[#f2f2fa] border-t-[#85857c] border-l-[#85857c] bg-white text-[12px] font-bold">
          <thead>
            <tr className="h-[18px] text-left text-[13px] leading-4 text-[#8b00a0]"><th className="w-3 border-b border-black" /><th className="w-20 border-b border-black">V</th></tr>
          </thead>
          <tbody>
            <tr className="h-[18px] leading-4">
              <td className="border-r border-b border-black pl-0.5"><svg viewBox="0 0 5 8" className="h-2 w-[5px]" aria-hidden="true"><path d="M0 0 L5 4 L0 8Z" /></svg></td>
              <td className="border-b border-black pl-px">12</td>
            </tr>
          </tbody>
        </table>
        <div className="mt-[7px]">
          <Hints items={[["F2 - Desc. Item", "w-[83px]"], ["F3 - Celular", "w-[68px]"], ["F4 - Cliente", "w-[66px]"], ["F5 - Cond. Pagto.", "w-[93px]"], ["F6 - Tipo Pagto.", "w-[86px]"], ["F7 - Valor", "w-[56px]"], ["F8 - Vendedor", "w-[78px]"], ["F9 - Ref.", "w-[50px]"]]} />
        </div>
        <div className="-mr-0.5 mt-3.5 flex justify-end gap-3 text-[13px] font-bold text-[#9090a8]">
          <button type="button" className="flex h-[34px] w-[147px] items-center gap-1 border-2 border-white border-r-[#85857c] border-b-[#85857c] bg-white pl-1.5">
            <svg viewBox="0 0 22 22" className="size-[22px]" aria-hidden="true">
              <path d="M7 1 H15 L21 7 V15 L15 21 H7 L1 15 V7Z" fill="#55554c" stroke="#33333c" strokeWidth="1.4" />
              <path d="M7.6 3 H14.4 L19 7.6 V14.4 L14.4 19 H7.6 L3 14.4 V7.6Z" fill="#8f8f88" stroke="#d8d8e0" />
              <path d="M19 7.6 V14.4 L14.4 19 H7.6 L5 16.5Z" fill="#66664f" />
            </svg>
            <span>Cancela<u>r</u> (Esc)</span>
          </button>
          <button type="button" className="flex h-[34px] w-[147px] items-center gap-1 border-2 border-white border-r-[#85857c] border-b-[#85857c] bg-white pl-1.5">
            <svg viewBox="0 0 22 22" className="size-[22px]" aria-hidden="true">
              <circle cx="11" cy="11" r="10.2" fill="#8f8f80" stroke="#77778a" strokeWidth="1.2" />
              <circle cx="11" cy="11" r="7.8" fill="#b8b8ae" stroke="#cfcfc8" />
              <path d="M8.6 4.6 L16 11 L8.6 17.4Z" fill="#fff" />
            </svg>
            <span><u>C</u>onfirmar (F10)</span>
          </button>
        </div>
      </form>
    </section>
  );
}

function TefField({ id, label, value, tone }) {
  return (
    <div className={"flex w-[122px] flex-col " + tone}>
      <label htmlFor={id} className="text-[14px] leading-[18px] font-bold">{label}</label>
      <input id={id} defaultValue={value} className="h-[27px] w-full border border-[#85857c] bg-[#d9fdff] text-right text-[18px] font-bold outline-none" />
    </div>
  );
}

function TefWindow() {
  return (
    <section className="absolute top-[244px] left-[406px] w-[546px] overflow-hidden rounded-md border border-[#33435a] bg-[#b5d9ff] px-[5px] pb-[5px]">
      <svg viewBox="0 0 546 26" className="absolute top-0 left-0 h-[26px] w-[546px]" aria-hidden="true">
        <path d="M0 0 H60 Q40 8 0 12Z" fill="#dcd4fa" />
        <path d="M100 15 Q112 5 130 1 H410 L426 10 L455 14 L420 17 H405 L395 25 H380 L375 17 H270 L255 22 H240 L232 17 H170 Q130 14 100 15Z" fill="#93b5a8" />
        <path d="M98 15 Q140 20 170 17 Q130 12 98 15 M410 1 L426 11 L455 14 L425 16Z" fill="#a9a9ff" opacity="0.6" />
      </svg>
      <h2 className={"relative flex h-[25px] items-center pl-px text-[11px] " + title}>TEF - Pagamento</h2>
      <div className={"relative border border-[#5a6a72] bg-white " + sans}>
        <div className="flex h-[220px] justify-between">
          <div className="pt-[18px] pl-3.5">
            <div className="grid grid-cols-2 gap-x-4 gap-y-3">
              <TefField id="tv" label="Total Venda" value="0,20" tone="text-black" />
              <TefField id="vp" label="Valor Pago" value="0,00" tone="text-black" />
              <TefField id="pend" label="Valor Pendente" value="0,20" tone="text-[#0000ff]" />
              <TefField id="troco" label="Troco" value="0,00" tone="text-[#ff0000]" />
            </div>
            <p className="mt-6 pl-[22px] font-['Lato','Open_Sans',sans-serif] text-[14px] leading-4 font-bold text-[#e2252b]">Essa tela não aparecia</p>
          </div>
          <div className="h-[189px] w-[244px] border border-r-0 border-[#77776a]">
            <table className={"w-[221px] table-fixed border-collapse text-[10px] " + title}>
              <thead>
                <tr className="h-4 bg-white">
                  <th className="w-[128px] border-r border-b border-black pl-0.5 text-left font-normal whitespace-nowrap">Forma de Pagamento</th>
                  <th className="border-r border-b border-black font-normal">Valor</th>
                </tr>
              </thead>
              <tbody>
                <tr className="h-[18px] bg-[#b5d9ff]">
                  <td className="border-r border-b border-[#b5b5a5]" />
                  <td className="border-r border-b border-[#b5b5a5]" />
                </tr>
              </tbody>
            </table>
          </div>
        </div>
        <div className={"flex h-[19px] gap-0.5 border-t border-[#b5b5c5] pt-px text-[10px] leading-[15px] text-black " + tahoma}>
          <button className="w-[137px] border border-[#b5b5a8]">F2 - Adicionar Pagamento</button>
          <button className="flex-1 border border-[#b5b5a8]">ESC - Sair e Cancelar Tudo</button>
        </div>
      </div>
    </section>
  );
}

export default function App() {
  return (
    <main className="relative flex h-screen w-full flex-col overflow-hidden bg-[#2b2b26] text-black">
      <MailWindow />
      <Taskbar />
      <TeamViewerWindow />
      <CaixaWindow />
      <FechamentoWindow />
      <TefWindow />
      <div className="pointer-events-none absolute top-[188px] left-[390px] h-[359px] w-[596px] border-3 border-[#ed1c24]" />
    </main>
  );
}
